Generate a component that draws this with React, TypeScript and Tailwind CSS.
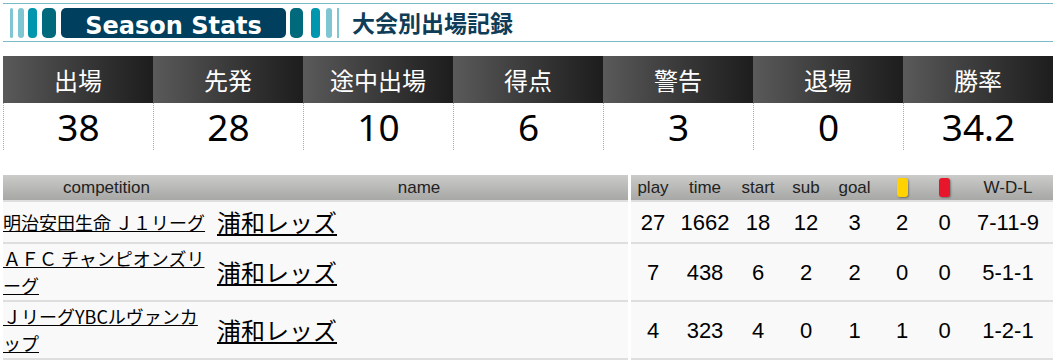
import React from 'react';

const summary = [
  { label: '出場', value: '38' },
  { label: '先発', value: '28' },
  { label: '途中出場', value: '10' },
  { label: '得点', value: '6' },
  { label: '警告', value: '3' },
  { label: '退場', value: '0' },
  { label: '勝率', value: '34.2' },
];

const rows = [
  { comp: '明治安田生命 Ｊ１リーグ', team: '浦和レッズ', h: 'h-[42px]', stats: ['27', '1662', '18', '12', '3', '2', '0', '7-11-9'] },
  { comp: 'ＡＦＣ チャンピオンズリーグ', team: '浦和レッズ', h: 'h-[58px]', stats: ['7', '438', '6', '2', '2', '0', '0', '5-1-1'] },
  { comp: 'ＪリーグYBCルヴァンカップ', team: '浦和レッズ', h: 'h-[58px]', stats: ['4', '323', '4', '0', '1', '1', '0', '1-2-1'] },
];

const statCols = ['w-[44px]', 'w-[60px]', 'w-[46px]', 'w-[50px]', 'w-[47px]', 'w-[48px]', 'w-[37px]', 'flex-1'];

const jp = "font-['Noto_Sans_CJK_JP',sans-serif]";
const arial = "font-['Liberation_Sans','Noto_Sans_CJK_JP',sans-serif]";

function Card({ color }: { color: string }) {
  return <span className={`inline-block h-[19px] w-[11px] rounded-[3px] shadow-[1px_1px_2px_rgba(0,0,0,0.35)] ${color}`} />;
}

function TitleBar() {
  return (
    <div className="flex h-[39px] items-center border-y border-[#7ab9c6] pl-[7px]">
      <div className="flex h-[30px] items-stretch">
        <span className="w-[3px] rounded-full bg-[#7fc6d2]" />
        <span className="ml-[5px] w-[6px] rounded-full bg-[#7fc6d2]" />
        <span className="ml-[4px] w-[9px] rounded-[4px] bg-[#0096ae]" />
        <span className="ml-[5px] w-[14px] rounded-[5px] bg-[#006a7c]" />
        <div className="ml-[5px] flex w-[225px] items-center justify-center rounded-[5px] bg-[#003f5e] pt-[6px]">
          <span className="font-['DejaVu_Sans',sans-serif] text-[24px] font-bold leading-[24px] text-white">Season Stats</span>
        </div>
        <span className="ml-[4px] w-[13px] rounded-[5px] bg-[#006a7c]" />
        <span className="ml-[8px] w-[9px] rounded-[4px] bg-[#0096ae]" />
        <span className="ml-[6px] w-[6px] rounded-full bg-[#7fc6d2]" />
        <span className="ml-[5px] w-[2px] bg-[#7fc6d2]" />
      </div>
      <h2 className={`ml-[13px] text-[23px] font-bold text-[#0f3d58] ${jp}`}>大会別出場記録</h2>
    </div>
  );
}

export default function App() {
  return (
    <div className="min-h-[363px] bg-white px-[3px] pt-[3px]">
      <TitleBar />

      <div className="mt-[14px] grid grid-cols-7">
        {summary.map((s) => (
          <div key={s.label} className="flex flex-col">
            <div className={`flex h-[47px] items-center justify-center bg-linear-to-r from-[#5a5a5a] to-[#1d1d1d] text-[24px] text-white ${jp}`}>
              {s.label}
            </div>
            <div className="flex h-[47px] items-center justify-center border-l border-dotted border-[#aaaaaa] font-['Noto_Sans',sans-serif] text-[37px] text-black">
              {s.value}
            </div>
          </div>
        ))}
      </div>

      <div className={`mt-[25px] ${arial}`}>
        <div className="flex gap-[3px]">
          <div className="flex h-[27px] w-[625px] border-b-2 border-[#dedede] bg-linear-to-b from-[#cbcbca] to-[#a7a7a5] text-[17px] text-[#222]">
            <div className="flex w-[207px] items-center justify-center">competition</div>
            <div className="flex flex-1 items-center justify-center">name</div>
          </div>
          <div className="flex h-[27px] flex-1 border-b-2 border-[#dedede] bg-linear-to-b from-[#cbcbca] to-[#a7a7a5] text-[17px] text-[#222]">
            {['play', 'time', 'start', 'sub', 'goal'].map((h, i) => (
              <div key={h} className={`flex items-center justify-center ${statCols[i]}`}>{h}</div>
            ))}
            <div className={`flex items-center justify-center ${statCols[5]}`}><Card color="bg-[#ffd200]" /></div>
            <div className={`flex items-center justify-center ${statCols[6]}`}><Card color="bg-[#e8162a]" /></div>
            <div className={`flex items-center justify-center ${statCols[7]}`}>W-D-L</div>
          </div>
        </div>

        {rows.map((r) => (
          <div key={r.comp} className="flex gap-[3px]">
            <div className={`flex w-[625px] border-b-2 border-[#dedede] bg-[#f9f9f9] ${r.h}`}>
              <div className="flex w-[207px] items-center">
                <a href="#" className={`text-[18px] leading-[27px] text-black underline ${jp}`}>{r.comp}</a>
              </div>
              <div className="flex flex-1 items-center pl-[7px]">
                <a href="#" className={`text-[24px] leading-[32px] text-black underline ${jp}`}>{r.team}</a>
              </div>
            </div>
            <div className={`flex flex-1 border-b-2 border-[#dedede] bg-[#f9f9f9] text-[22px] text-black ${r.h}`}>
              {r.stats.map((v, i) => (
                <div key={i} className={`flex items-center justify-center ${statCols[i]}`}>{v}</div>
              ))}
            </div>
          </div>
        ))}
      </div>
    </div>
  );
}
